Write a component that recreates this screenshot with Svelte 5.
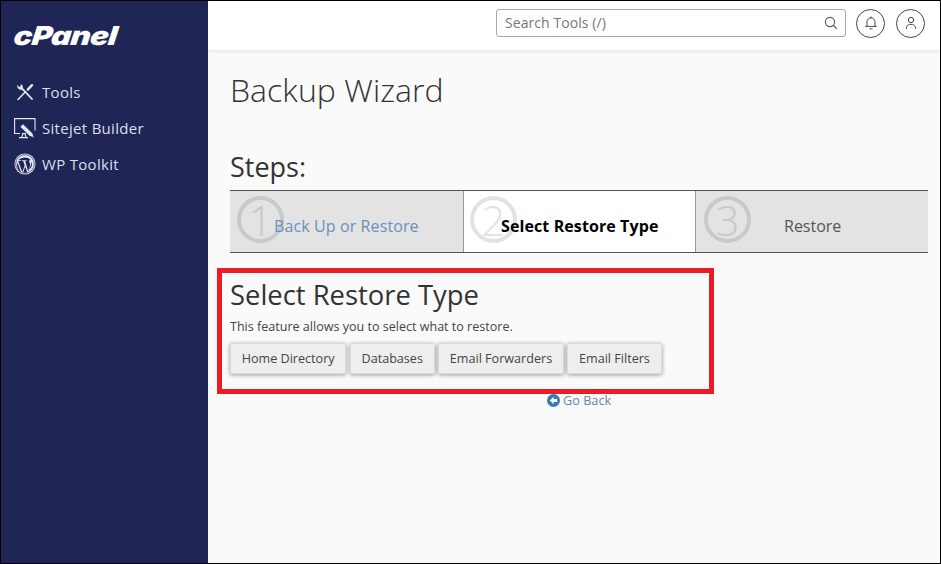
<script>
  const nav = [
    { label: 'Tools', icon: 'tools' },
    { label: 'Sitejet Builder', icon: 'sitejet' },
    { label: 'WP Toolkit', icon: 'wp' }
  ];
  const steps = [
    { n: 1, label: 'Back Up or Restore', kind: 'link' },
    { n: 2, label: 'Select Restore Type', kind: 'current' },
    { n: 3, label: 'Restore', kind: 'next' }
  ];
  const buttons = ['Home Directory', 'Databases', 'Email Forwarders', 'Email Filters'];
</script>

<div class="frame">
  <aside class="side">
    <div class="logo"><span>cPanel</span></div>
    <nav>
      {#each nav as item}
        <div class="nav-item">
          <span class="nav-icon">
            {#if item.icon === 'tools'}
              <svg width="20" height="20" viewBox="0 0 20 20" fill="none" stroke="#e6e8f2" stroke-width="1.5" stroke-linecap="round">
                <path d="M3 17.5 L10.5 9.8" />
                <path d="M7.4 6.8 L17 17" stroke-width="1.8" />
                <path d="M2.6 3.8 C2.2 6.2 4.4 8.2 7 7.2 C8.2 6 7.8 3.8 6.2 2.6 L5.6 4.8 L3.8 5.2 Z" fill="#e6e8f2" stroke-width="0.6" />
                <path d="M12.8 7.6 L17 3.2" stroke-width="2.4" />
              </svg>
            {:else if item.icon === 'sitejet'}
              <svg width="22" height="21" viewBox="0 0 22 21" fill="none" stroke="#e6e8f2" stroke-width="1.1">
                <path d="M6 15.5 H0.6 V0.6 H21 V12.5" />
                <path d="M8 15.5 H12" />
                <path d="M5 19.6 H14 M9 15.5 L7.6 19.6 M11 15.5 L12 19.6" />
                <path d="M9 5.8 L18.6 15.2 L20.4 20 L15.6 18.2 L6 8.8 Z" fill="#e6e8f2" stroke="#1f2655" stroke-width="0.8" />
              </svg>
            {:else}
              <svg width="22" height="22" viewBox="0 0 22 22">
                <circle cx="11" cy="11" r="10.5" fill="#e6e8f2" />
                <circle cx="11" cy="11" r="9.3" fill="none" stroke="#1f2655" stroke-width="0.7" />
                <path d="M4.2 8 L8.3 19 L10.7 12.3 L9.1 8 H7.8 V7.2 H12.6 V8 H11.2 L14.2 18.6 L16 13 C16.6 10.8 15.6 9.6 15.2 8.7 C14.8 7.6 15.6 6.8 16.6 6.9 C13.4 3.4 7.4 3.8 4.6 7.2 H7 V8 Z" fill="#1f2655" />
                <path d="M17.6 8.2 C18.8 11 17.8 14.6 15.2 16.8 L17 11.8 C17.4 10.6 17.6 9.4 17.6 8.2 Z M7 19.1 L3.4 9.4 C2.4 12.9 4 17.4 7 19.1 Z M11.2 13.6 L13.4 19.4 C12 19.8 10.4 19.8 9.2 19.4 Z" fill="#1f2655" />
              </svg>
            {/if}
          </span>
          <span>{item.label}</span>
        </div>
      {/each}
    </nav>
  </aside>

  <div class="main">
    <header class="top">
      <div class="search">
        <span class="placeholder">Search Tools (/)</span>
        <svg width="14" height="14" viewBox="0 0 14 14" fill="none" stroke="#555" stroke-width="1.1" stroke-linecap="round">
          <circle cx="6" cy="6" r="4.6" />
          <path d="M9.5 9.5 L12.6 12.6" />
        </svg>
      </div>
      <div class="round">
        <svg width="14" height="14" viewBox="0 0 14 14" fill="none" stroke="#333" stroke-width="0.9" stroke-linecap="round">
          <path d="M3 10.4 V6 C3 3.6 4.8 1.8 7 1.8 C9.2 1.8 11 3.6 11 6 V10.4 M1.6 10.4 H12.4 M5.8 12.8 H8.2 M7 1.8 V1" />
        </svg>
      </div>
      <div class="round">
        <svg width="14" height="14" viewBox="0 0 14 14" fill="none" stroke="#333" stroke-width="0.9" stroke-linecap="round">
          <circle cx="7" cy="4" r="2.7" />
          <path d="M2.4 12.4 C2.4 9.8 4 8.6 5.4 8.4 H8.6 C10 8.6 11.6 9.8 11.6 12.4" />
        </svg>
      </div>
    </header>

    <main class="content">
      <h1>Backup Wizard</h1>
      <h2 class="steps-title">Steps:</h2>
      <div class="steps">
        {#each steps as s}
          <div class="step {s.kind}">
            <span class="num">{s.n}</span>
            <span class="step-label">{s.label}</span>
          </div>
        {/each}
      </div>

      <section class="callout">
        <h2>Select Restore Type</h2>
        <p>This feature allows you to select what to restore.</p>
        <div class="btns">
          {#each buttons as b}
            <button type="button">{b}</button>
          {/each}
        </div>
      </section>

      <div class="back">
        <svg width="13" height="13" viewBox="0 0 13 13">
          <circle cx="6.5" cy="6.5" r="6.5" fill="#337ab7" />
          <path d="M6.6 2.8 L2.8 6.5 L6.6 10.2 V7.9 H10.2 V5.1 H6.6 Z" fill="#fff" />
        </svg>
        <span>Go Back</span>
      </div>
    </main>
  </div>
</div>

<style>
  :global(body) {
    margin: 0;
    background: #000;
  }
  .frame {
    width: 941px;
    height: 564px;
    box-sizing: border-box;
    border: 1px solid #000;
    display: flex;
    font-family: "Open Sans", sans-serif;
    overflow: hidden;
    background: #fafafa;
  }
  .side {
    width: 207px;
    flex: none;
    background: #1f2655;
    color: #dcdfec;
  }
  .logo {
    margin: 19px 0 0 13px;
    height: 32px;
    font-family: "Inter", sans-serif;
    font-weight: 900;
    font-style: italic;
    font-size: 26px;
    line-height: 32px;
    letter-spacing: -0.6px;
    color: #fff;
  }
  .logo span {
    display: inline-block;
    transform-origin: left center;
    transform: scaleX(1.2) skewX(-6deg);
  }
  nav {
    margin-top: 22px;
    display: flex;
    flex-direction: column;
  }
  .nav-item {
    height: 36px;
    display: flex;
    align-items: center;
    padding-left: 12px;
    font-size: 15px;
    letter-spacing: 0.3px;
  }
  .nav-icon {
    width: 24px;
    display: flex;
    align-items: center;
    justify-content: center;
    margin-right: 5px;
  }
  .main {
    flex: 1;
    min-width: 0;
    display: flex;
    flex-direction: column;
  }
  .top {
    height: 49px;
    flex: none;
    background: #fff;
    box-shadow: 0 1px 4px rgba(0, 0, 0, 0.1);
    display: flex;
    align-items: center;
    justify-content: flex-end;
    gap: 11px;
    padding: 0 15px 5px 0;
    box-sizing: border-box;
  }
  .search {
    width: 350px;
    height: 28px;
    box-sizing: border-box;
    border: 1px solid #aaa;
    border-radius: 3px;
    display: flex;
    align-items: center;
    justify-content: space-between;
    padding: 0 7px 0 8px;
    font-size: 14px;
    letter-spacing: 0.07px;
    color: #777;
    margin-right: -1px;
    background: #fff;
  }
  .placeholder {
    margin-bottom: 2px;
  }
  .round {
    width: 29px;
    height: 29px;
    box-sizing: border-box;
    border: 1px solid #444;
    border-radius: 50%;
    display: flex;
    align-items: center;
    justify-content: center;
  }
  .content {
    padding: 0 12px 0 22px;
    color: #333;
  }
  h1 {
    font-weight: 300;
    font-size: 32px;
    line-height: 44px;
    margin: 18px 0 0;
    letter-spacing: 0.05px;
  }
  .steps-title {
    font-weight: 400;
    font-size: 27px;
    line-height: 36px;
    margin: 37px 0 5px;
  }
  .steps {
    display: flex;
    height: 63px;
    box-sizing: border-box;
    border-top: 1px solid #555;
    border-bottom: 1px solid #555;
  }
  .step {
    position: relative;
    display: flex;
    align-items: center;
    background: #e3e3e3;
    overflow: hidden;
  }
  .step:nth-child(1) { width: 233px; }
  .step:nth-child(2) {
    width: 233px;
    background: #fff;
    border-left: 1px solid #999;
    border-right: 1px solid #999;
    box-sizing: border-box;
  }
  .step:nth-child(3) { flex: 1; }
  .num {
    position: absolute;
    left: 7px;
    top: 5px;
    width: 39px;
    height: 39px;
    border: 4.5px solid #c9c9c9;
    border-radius: 50%;
    color: #c9c9c9;
    font-size: 42px;
    font-weight: 300;
    line-height: 39px;
    text-align: center;
  }
  .current .num {
    left: 6px;
    border-color: #e2e2e2;
    color: #e2e2e2;
  }
  .next .num {
    left: 8px;
  }
  .step-label {
    position: relative;
    font-size: 16px;
    margin-top: 8px;
  }
  .link .step-label {
    color: #6b90bd;
    margin-left: 44px;
    letter-spacing: 0.11px;
  }
  .current .step-label {
    color: #000;
    font-weight: 700;
    margin-left: 37px;
    letter-spacing: 0.1px;
  }
  .next .step-label {
    margin-left: 88px;
    color: #555;
  }
  .callout {
    width: 497px;
    height: 126px;
    box-sizing: border-box;
    border: 5px solid #ed1c24;
    margin: 15px 0 0 -13px;
    padding: 5px 0 0 8px;
  }
  .callout h2 {
    font-weight: 400;
    font-size: 27.4px;
    line-height: 34px;
    margin: 0;
  }
  .callout p {
    font-size: 12.55px;
    line-height: 18px;
    margin: 6px 0 7px;
    color: #444;
  }
  .btns {
    display: flex;
    gap: 3.5px;
  }
  button {
    height: 31px;
    padding: 0 10.7px;
    font: 400 12.6px "Open Sans", sans-serif;
    color: #444;
    background: #eee;
    border: 1px solid #dcdcdc;
    border-radius: 2px;
    box-shadow: 0 1px 4px rgba(0, 0, 0, 0.4);
  }
  .back {
    display: flex;
    align-items: center;
    gap: 3px;
    margin: -2px 0 0 317px;
    font-size: 12.7px;
    line-height: 16px;
    color: #5d88b5;
  }
</style>
